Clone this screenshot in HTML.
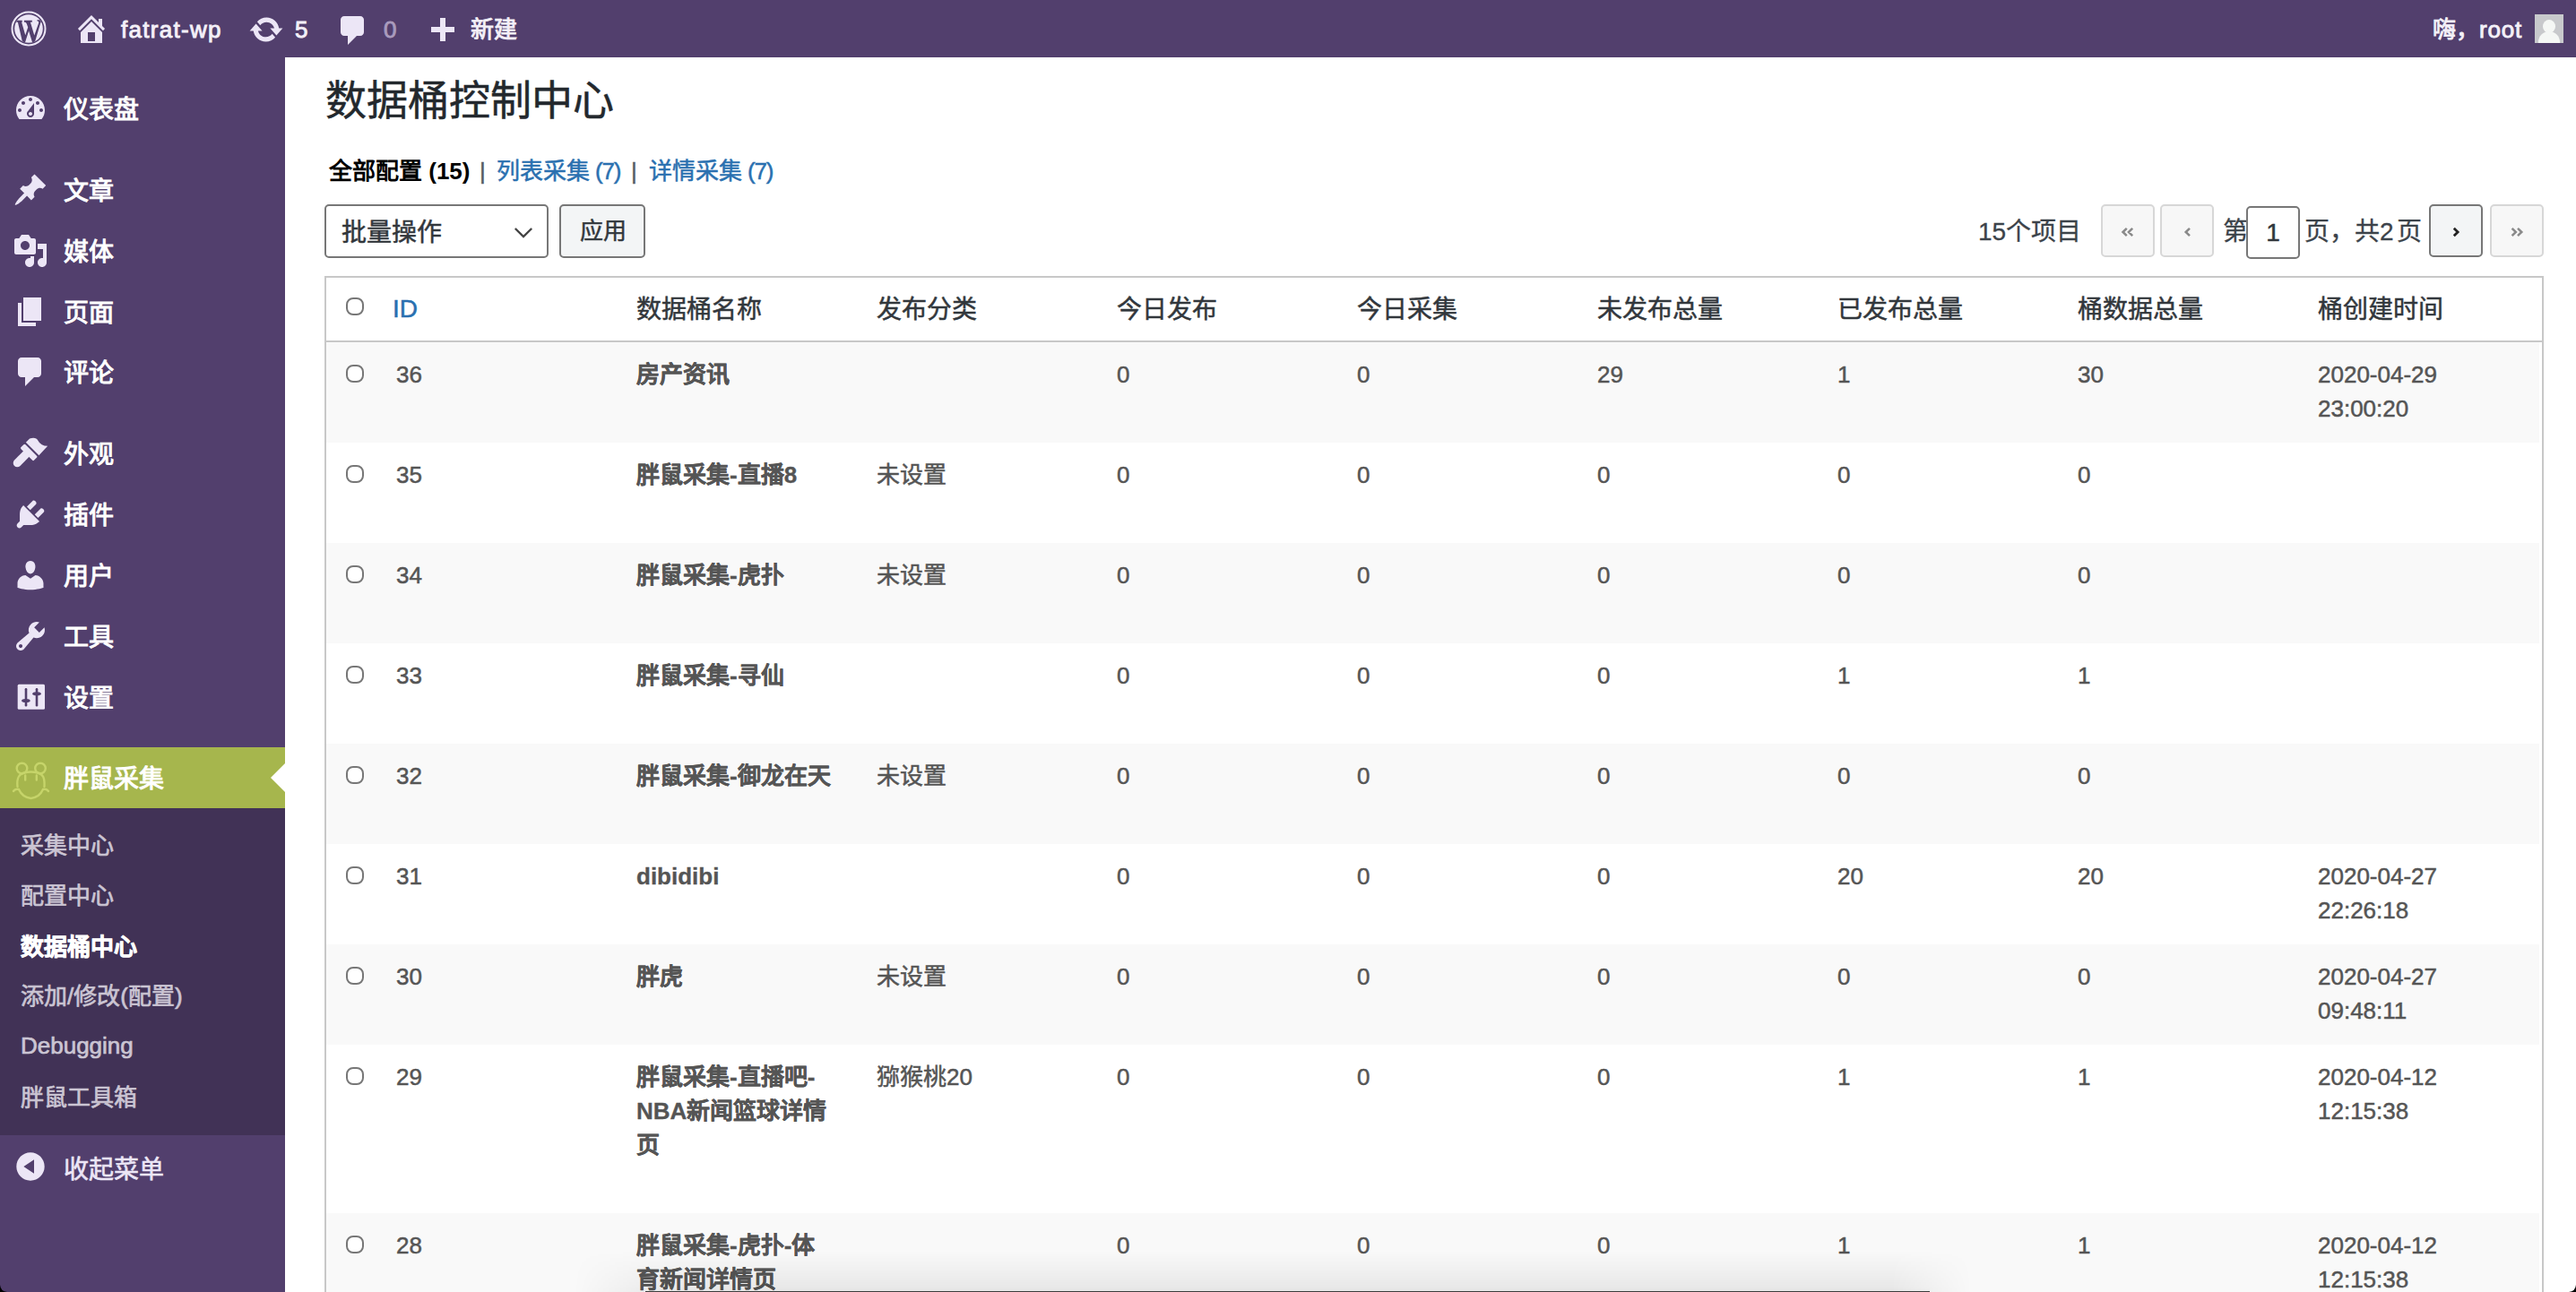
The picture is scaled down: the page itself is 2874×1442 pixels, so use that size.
<!DOCTYPE html>
<html lang="zh-CN"><head><meta charset="utf-8">
<style>
*{margin:0;padding:0;box-sizing:border-box}
html,body{width:2874px;height:1442px;overflow:hidden;background:#fff;font-family:"Liberation Sans",sans-serif;position:relative;-webkit-text-stroke-width:0.5px}
.a{position:absolute;white-space:nowrap}
#bar{position:absolute;left:0;top:0;width:2874px;height:64px;background:#523f6d}
#side{position:absolute;left:0;top:64px;width:318px;height:1378px;background:#523f6d}
.bt{color:#f4f0f8;font-size:26px;line-height:26px;-webkit-text-stroke-width:0.9px}
.ns{-webkit-text-stroke-width:0}
.mi{color:#fff;font-size:28px;line-height:28px;left:71px;-webkit-text-stroke-width:1px}
.ic{position:absolute;fill:#ece6f6}
#sub{position:absolute;left:0;top:902px;width:318px;height:365px;background:#413256}
.si{color:#cbc5d3;font-size:26px;line-height:26px;left:23px;-webkit-text-stroke-width:0.7px}
#green{position:absolute;left:0;top:834px;width:318px;height:68px;background:#a6b64d}
.h1{left:363px;top:89px;font-size:46px;line-height:46px;color:#23282d}
.ss{font-size:26px;line-height:26px;top:178px;color:#2a70b0}
.sep{color:#555d66}
.box{position:absolute;border:2px solid #777;border-radius:5px;background:#fff}
.pg{position:absolute;width:60px;height:59px;border:2px solid #d7d7d7;border-radius:5px;background:#f7f7f7}
.th{font-size:28px;line-height:28px;top:332px;color:#32373c}
.row{position:absolute;left:364px;width:2469px}
.odd{background:#f9f9f9}
.td{font-size:26px;line-height:38px;color:#555}
.cb{position:absolute;width:20px;height:20px;border:2px solid #777;border-radius:8px;background:#fff}
b{font-weight:bold}
</style></head><body>
<div id="bar">
  <svg class="a" style="left:0;top:0" width="64" height="64" viewBox="0 0 64 64">
    <defs><clipPath id="cd"><circle cx="32" cy="32" r="15.8"/></clipPath></defs>
    <circle cx="32" cy="32" r="18.5" fill="none" stroke="#ece6f6" stroke-width="2"/>
    <circle cx="32" cy="32" r="15.8" fill="#ece6f6"/>
    <g clip-path="url(#cd)" fill="#523f6d"><path d="M18.2 22.8 H24.7 V24.7 H24.1 L28.3 39.2 L31.2 30.6 L29.7 26.2 L28.4 24.7 H26.9 V22.8 H35.8 V24.7 H33.9 L38.3 39.4 L43.2 25.5 Q43.6 23.5 41.6 23.6 L41.3 22.3 H46.6 V23.5 Q45.6 24.5 45.2 25.8 L38.6 48 H36.3 L32.1 34.5 L27.8 48 H25.3 L19.9 24.7 H18.2 Z"/></g>
  </svg>
  <svg class="ic" style="left:82px;top:12px" width="40" height="40" viewBox="0 0 20 20"><path d="M16 8.5l1.53 1.53-1.06 1.06L10 4.62l-6.47 6.47-1.06-1.06L10 2.5l4 4v-2h2v4zm-6-2.46l6 5.99V18H4v-5.97zM12 17v-5H8v5h4z"/></svg>
  <div class="a bt" style="left:135px;top:20px;letter-spacing:1.3px">fatrat-wp</div>
  <svg class="ic" style="left:277px;top:13px" width="40" height="40" viewBox="0 0 20 20"><path d="M10.2 3.28c3.53 0 6.43 2.61 6.92 6h2.08l-3.5 4-3.5-4h2.32c-.45-1.970-2.21-3.45-4.32-3.45-1.450 0-2.730.71-3.54 1.78L4.95 5.66C6.23 4.2 8.11 3.28 10.2 3.28zm-.4 13.44c-3.52 0-6.43-2.61-6.92-6H.8l3.5-4c1.17 1.33 2.33 2.67 3.5 4H5.48c.45 1.97 2.21 3.45 4.32 3.45 1.45 0 2.73-.71 3.54-1.78l1.71 1.95c-1.28 1.46-3.15 2.38-5.25 2.38z"/></svg>
  <div class="a bt" style="left:329px;top:20px">5</div>
  <svg class="ic" style="left:374px;top:14px" width="40" height="40" viewBox="0 0 20 20"><path d="M5 2h9c1.1 0 2 .9 2 2v7c0 1.1-.9 2-2 2h-2l-5 5v-5H5c-1.1 0-2-.9-2-2V4c0-1.1.9-2 2-2z"/></svg>
  <div class="a bt" style="left:428px;top:20px;color:#a99bbd">0</div>
  <svg class="ic" style="left:473px;top:16px" width="40" height="40" viewBox="0 0 20 20"><path d="M17 7v3h-5v5H9v-5H4V7h5V2h3v5h5z"/></svg>
  <div class="a bt" style="left:525px;top:20px">新建</div>
  <div class="a bt" style="left:2714px;top:20px">嗨，<span style="letter-spacing:0.8px">root</span></div>
  <div class="a" style="left:2828px;top:16px;width:32px;height:32px;background:#c8c9cc;overflow:hidden">
    <div class="a" style="left:9px;top:6px;width:14px;height:15px;border-radius:50%;background:#f5f7f5"></div>
    <div class="a" style="left:4px;top:19px;width:24px;height:20px;border-radius:12px 12px 0 0;background:#f5f7f5"></div>
  </div>
</div>

<div id="side">
</div>
<div id="green"></div>
<div id="sub"></div>
<svg class="ic" id="i_dash" style="left:14px;top:101px" width="40" height="40" viewBox="0 0 20 20"><path d="M3.76 16h12.48c1.1-1.37 1.76-3.11 1.76-5 0-4.42-3.58-8-8-8s-8 3.58-8 8c0 1.89.66 3.63 1.76 5zM10 4c.55 0 1 .45 1 1s-.45 1-1 1-1-.45-1-1 .45-1 1-1zM6 6c.55 0 1 .45 1 1s-.45 1-1 1-1-.45-1-1 .45-1 1-1zm8 0c.55 0 1 .45 1 1s-.45 1-1 1-1-.45-1-1 .45-1 1-1zm-5.37 5.55L12 7v6c0 1.1-.9 2-2 2s-2-.9-2-2c0-.57.24-1.08.63-1.45zM4 10c.55 0 1 .45 1 1s-.45 1-1 1-1-.45-1-1 .45-1 1-1zm12 0c.55 0 1 .45 1 1s-.45 1-1 1-1-.45-1-1 .45-1 1-1zm-5 3c0-.55-.45-1-1-1s-1 .45-1 1 .45 1 1 1 1-.45 1-1z"/></svg>
<svg class="ic" id="i_post" style="left:14px;top:192px" width="40" height="40" viewBox="0 0 20 20"><path d="M10.44 3.02l1.82-1.82 6.36 6.35-1.83 1.82c-1.05-.68-2.48-.57-3.41.36l-.75.75c-.92.93-1.04 2.35-.35 3.41l-1.83 1.82-2.41-2.41-2.8 2.79c-.42.42-3.38 2.71-3.8 2.29s1.86-3.39 2.28-3.81l2.79-2.79L4.1 9.36l1.83-1.82c1.05.69 2.48.57 3.4-.36l.75-.75c.93-.92 1.05-2.35.36-3.41z"/></svg>
<svg class="ic" id="i_media" style="left:14px;top:260px" width="40" height="40" viewBox="0 0 20 20"><path d="M13 11V4c0-.55-.45-1-1-1h-1.67L9 1H5L3.67 3H2c-.55 0-1 .45-1 1v7c0 .55.45 1 1 1h10c.55 0 1-.45 1-1zM7 4.5c1.38 0 2.5 1.12 2.5 2.5S8.38 9.5 7 9.5 4.5 8.38 4.5 7 5.62 4.5 7 4.5zM14 6h5v10.5c0 1.38-1.12 2.5-2.5 2.5S14 17.88 14 16.5s1.12-2.5 2.5-2.5c.17 0 .34.02.5.05V9h-3V6zm-4 8.05V13h2v3.5c0 1.38-1.12 2.5-2.5 2.5S7 17.88 7 16.5 8.12 14 9.5 14c.17 0 .34.02.5.05z"/></svg>
<svg class="ic" id="i_page" style="left:14px;top:328px" width="40" height="40" viewBox="0 0 20 20"><path d="M6 15V2h10v13H6zm-1 1h8v2H3V5h2v11z"/></svg>
<svg class="ic" id="i_comm" style="left:14px;top:395px" width="40" height="40" viewBox="0 0 20 20"><path d="M5 2h9c1.1 0 2 .9 2 2v7c0 1.1-.9 2-2 2h-2l-5 5v-5H5c-1.1 0-2-.9-2-2V4c0-1.1.9-2 2-2z"/></svg>
<svg class="a" id="i_appear" style="left:0;top:470px" width="60" height="60" viewBox="0 470 60 60"><g transform="translate(35.5 501.8) rotate(45)" fill="#ece6f6"><path d="M-5.5 6 H3.6 V22 A4.55 4.55 0 0 1 -5.5 22 Z"/><rect x="-10.4" y="1" width="20.6" height="7" rx="1.5"/><path d="M-10.4 -1 H10.2 L9.6 -15.4 Q4 -10 -2 -12 Q-7 -13.5 -10.4 -7 Z"/></g></svg>
<svg class="ic" id="i_plug" style="left:14px;top:554px" width="40" height="40" viewBox="0 0 20 20"><path d="M13.11 4.36L9.87 7.6 8 5.73l3.24-3.24c.35-.34 1.05-.2 1.56.32.52.51.66 1.21.31 1.55zm-8 1.77l.91-1.12 9.01 9.01-1.19.84c-.71.71-2.63 1.16-3.82 1.16H6.14L4.9 17.26c-.59.59-1.54.59-2.12 0-.59-.58-.59-1.53 0-2.12l1.24-1.24v-3.88c0-1.13.4-3.19 1.09-3.89zm7.26 3.97l3.24-3.24c.34-.35 1.04-.21 1.55.31.52.51.66 1.21.31 1.55l-3.24 3.25z"/></svg>
<svg class="ic" id="i_users" style="left:14px;top:622px" width="40" height="40" viewBox="0 0 20 20"><path d="M10 9.25c-2.27 0-2.73-3.44-2.73-3.44C7 4.02 7.82 2 9.97 2c2.16 0 2.98 2.02 2.71 3.81 0 0-.41 3.44-2.68 3.44zm0 2.57L12.72 10c2.39 0 4.52 2.33 4.52 4.530v2.49s-3.65 1.13-7.24 1.130c-3.65 0-7.24-1.13-7.24-1.13v-2.49c0-2.25 1.94-4.48 4.47-4.48z"/></svg>
<svg class="ic" id="i_tools" style="left:14px;top:690px" width="40" height="40" viewBox="0 0 20 20"><path d="M16.68 9.77c-1.34 1.34-3.3 1.67-4.95.99l-5.41 6.52c-.99.99-2.59.99-3.58 0s-.99-2.59 0-3.57l6.52-5.42c-.68-1.65-.35-3.61.99-4.95 1.28-1.28 3.12-1.62 4.72-1.06l-2.89 2.890 2.82 2.82 2.86-2.87c.53 1.58.18 3.390-1.08 4.65zM3.81 16.21c.4.39 1.04.39 1.43 0 .4-.4.4-1.04 0-1.43-.39-.4-1.03-.4-1.43 0-.39.39-.39 1.03 0 1.43z"/></svg>
<svg class="a" id="i_settings" style="left:0;top:750px" width="60" height="60" viewBox="0 750 60 60"><rect x="19.7" y="763.7" width="30.3" height="28.1" rx="1.5" fill="#ece6f6"/><g fill="#523f6d"><rect x="27.7" y="768" width="2.6" height="20.5" rx="1.2"/><ellipse cx="28.9" cy="782" rx="4.8" ry="2"/><rect x="39.7" y="768" width="2.6" height="20.5" rx="1.2"/><ellipse cx="41" cy="774.2" rx="4.8" ry="2"/></g></svg>
<svg class="ic" id="i_collapse" style="left:14px;top:1282px" width="40" height="40" viewBox="0 0 20 20"><path d="M10 2.16c4.33 0 7.84 3.51 7.84 7.84s-3.51 7.84-7.84 7.84S2.16 14.33 2.16 10 5.71 2.16 10 2.16zm2 11.72V6.12L6.18 9.97z"/></svg>

<div class="a mi" style="top:109px">仪表盘</div>
<div class="a mi" style="top:200px">文章</div>
<div class="a mi" style="top:268px">媒体</div>
<div class="a mi" style="top:336px">页面</div>
<div class="a mi" style="top:403px">评论</div>
<div class="a mi" style="top:494px">外观</div>
<div class="a mi" style="top:562px">插件</div>
<div class="a mi" style="top:630px">用户</div>
<div class="a mi" style="top:698px">工具</div>
<div class="a mi" style="top:766px">设置</div>
<svg class="a" style="left:0;top:834px" width="70" height="68" viewBox="0 834 70 68"><g fill="none" stroke="#c6d46a" stroke-width="2.4" stroke-linecap="round"><circle cx="24.5" cy="857.5" r="5.8"/><circle cx="45" cy="857.5" r="5.8"/><path d="M19.5 878 C18.5 868 21 864 27 862.5 Q34.5 860.5 42 862.5 C48 864 50 868 49.5 878"/><path d="M15 883 Q17 880 21 881 Q25 890 34.5 891 Q44 890 48 881 Q52 880 54 883"/><path d="M28.2 865.5 V870.5 M40.8 865.5 V870.5"/></g></svg>
<div class="a mi" style="top:856px">胖鼠采集</div>
<svg class="a" style="left:302px;top:852px" width="16" height="32" viewBox="0 0 16 32"><path d="M16 0 L0 16 L16 32 Z" fill="#fff"/></svg>

<div class="a si" style="top:931px">采集中心</div>
<div class="a si" style="top:987px">配置中心</div>
<div class="a si ns" style="top:1044px;color:#fff;font-weight:bold">数据桶中心</div>
<div class="a si" style="top:1099px">添加/修改(配置)</div>
<div class="a si" style="top:1154px">Debugging</div>
<div class="a si" style="top:1212px">胖鼠工具箱</div>
<div class="a mi" style="top:1292px;color:#ece6f6;-webkit-text-stroke-width:0.6px">收起菜单</div>

<!-- content -->
<div class="a h1">数据桶控制中心</div>
<div class="a ss ns" style="left:367px;color:#000;font-weight:bold">全部配置 (15)</div>
<div class="a ss sep" style="left:535px">|</div>
<div class="a ss" style="left:554px">列表采集<span style="letter-spacing:-1.2px"> (7)</span></div>
<div class="a ss sep" style="left:704px">|</div>
<div class="a ss" style="left:724px">详情采集<span style="letter-spacing:-1.2px"> (7)</span></div>

<div class="box" style="left:362px;top:228px;width:250px;height:60px"></div>
<div class="a" style="left:381px;top:246px;font-size:28px;line-height:28px;color:#32373c">批量操作</div>
<svg class="a" style="left:560px;top:240px" width="50" height="40" viewBox="560 240 50 40"><path d="M574.8 255 L584 264 L593.2 255" fill="none" stroke="#444" stroke-width="2.4"/></svg>
<div class="box" style="left:624px;top:228px;width:96px;height:60px;background:#f3f5f6"></div>
<div class="a" style="left:647px;top:245px;font-size:26px;line-height:26px;color:#32373c">应用</div>

<div class="a" style="left:2207px;top:245px;font-size:28px;line-height:28px;color:#3c434a;-webkit-text-stroke-width:0.3px">15个项目</div>
<div class="pg" style="left:2344px;top:228px"></div>
<div class="pg" style="left:2410px;top:228px"></div>
<div class="a" style="left:2480px;top:245px;font-size:28px;line-height:28px;color:#3c434a;-webkit-text-stroke-width:0.3px">第</div>
<div class="box" style="left:2506px;top:230px;width:60px;height:59px;text-align:center;font-size:28px;line-height:55px;color:#32373c">1</div>
<div class="a" style="left:2571px;top:245px;font-size:28px;line-height:28px;color:#3c434a;-webkit-text-stroke-width:0.3px">页，共2<span style="margin-left:3px">页</span></div>
<div class="pg" style="left:2710px;top:228px;border-color:#777;background:#f3f5f6"></div>
<div class="pg" style="left:2778px;top:228px"></div>
<svg class="a" style="left:2340px;top:240px" width="500" height="40" viewBox="2340 240 500 40"><g fill="none" stroke-width="2.5" stroke-linejoin="miter"><path d="M2372.8 254.8 L2368.5 259 L2372.8 263.2 M2379.2 254.8 L2374.9 259 L2379.2 263.2 M2443 254.8 L2438.7 259 L2443 263.2" stroke="#8a8a8a"/><path d="M2737.8 254.8 L2742.1 259 L2737.8 263.2" stroke="#222" stroke-width="2.8"/><path d="M2802.6 254.8 L2806.9 259 L2802.6 263.2 M2809 254.8 L2813.3 259 L2809 263.2" stroke="#8a8a8a"/></g></svg>

<!-- table -->
<div class="a" style="left:362px;top:308px;width:2476px;height:1200px;border:2px solid #c8c8c8;border-width:2px 2px 0 2px"></div>
<div class="a" style="left:364px;top:380px;width:2472px;height:2px;background:#c8c8c8"></div>
<div class="cb" style="left:386px;top:332px"></div>
<div class="a th" style="left:438px;top:331px;color:#2a70b0">ID</div>
<div class="a th" style="left:710px">数据桶名称</div>
<div class="a th" style="left:978px">发布分类</div>
<div class="a th" style="left:1246px">今日发布</div>
<div class="a th" style="left:1514px">今日采集</div>
<div class="a th" style="left:1782px">未发布总量</div>
<div class="a th" style="left:2050px">已发布总量</div>
<div class="a th" style="left:2318px">桶数据总量</div>
<div class="a th" style="left:2586px">桶创建时间</div>

<div class="row odd" style="top:382px;height:112px"></div>
<div class="cb" style="left:386px;top:407px"></div>
<div class="a td" style="left:442px;top:399px">36</div>
<div class="a td" style="left:710px;top:399px;font-weight:bold;-webkit-text-stroke-width:0.3px">房产资讯</div>
<div class="a td" style="left:1246px;top:399px">0</div>
<div class="a td" style="left:1514px;top:399px">0</div>
<div class="a td" style="left:1782px;top:399px">29</div>
<div class="a td" style="left:2050px;top:399px">1</div>
<div class="a td" style="left:2318px;top:399px">30</div>
<div class="a td" style="left:2586px;top:399px">2020-04-29<br>23:00:20</div>
<div class="row" style="top:494px;height:112px"></div>
<div class="cb" style="left:386px;top:519px"></div>
<div class="a td" style="left:442px;top:511px">35</div>
<div class="a td" style="left:710px;top:511px;font-weight:bold;-webkit-text-stroke-width:0.3px">胖鼠采集-直播8</div>
<div class="a td" style="left:978px;top:511px">未设置</div>
<div class="a td" style="left:1246px;top:511px">0</div>
<div class="a td" style="left:1514px;top:511px">0</div>
<div class="a td" style="left:1782px;top:511px">0</div>
<div class="a td" style="left:2050px;top:511px">0</div>
<div class="a td" style="left:2318px;top:511px">0</div>
<div class="row odd" style="top:606px;height:112px"></div>
<div class="cb" style="left:386px;top:631px"></div>
<div class="a td" style="left:442px;top:623px">34</div>
<div class="a td" style="left:710px;top:623px;font-weight:bold;-webkit-text-stroke-width:0.3px">胖鼠采集-虎扑</div>
<div class="a td" style="left:978px;top:623px">未设置</div>
<div class="a td" style="left:1246px;top:623px">0</div>
<div class="a td" style="left:1514px;top:623px">0</div>
<div class="a td" style="left:1782px;top:623px">0</div>
<div class="a td" style="left:2050px;top:623px">0</div>
<div class="a td" style="left:2318px;top:623px">0</div>
<div class="row" style="top:718px;height:112px"></div>
<div class="cb" style="left:386px;top:743px"></div>
<div class="a td" style="left:442px;top:735px">33</div>
<div class="a td" style="left:710px;top:735px;font-weight:bold;-webkit-text-stroke-width:0.3px">胖鼠采集-寻仙</div>
<div class="a td" style="left:1246px;top:735px">0</div>
<div class="a td" style="left:1514px;top:735px">0</div>
<div class="a td" style="left:1782px;top:735px">0</div>
<div class="a td" style="left:2050px;top:735px">1</div>
<div class="a td" style="left:2318px;top:735px">1</div>
<div class="row odd" style="top:830px;height:112px"></div>
<div class="cb" style="left:386px;top:855px"></div>
<div class="a td" style="left:442px;top:847px">32</div>
<div class="a td" style="left:710px;top:847px;font-weight:bold;-webkit-text-stroke-width:0.3px">胖鼠采集-御龙在天</div>
<div class="a td" style="left:978px;top:847px">未设置</div>
<div class="a td" style="left:1246px;top:847px">0</div>
<div class="a td" style="left:1514px;top:847px">0</div>
<div class="a td" style="left:1782px;top:847px">0</div>
<div class="a td" style="left:2050px;top:847px">0</div>
<div class="a td" style="left:2318px;top:847px">0</div>
<div class="row" style="top:942px;height:112px"></div>
<div class="cb" style="left:386px;top:967px"></div>
<div class="a td" style="left:442px;top:959px">31</div>
<div class="a td" style="left:710px;top:959px;font-weight:bold;-webkit-text-stroke-width:0.3px">dibidibi</div>
<div class="a td" style="left:1246px;top:959px">0</div>
<div class="a td" style="left:1514px;top:959px">0</div>
<div class="a td" style="left:1782px;top:959px">0</div>
<div class="a td" style="left:2050px;top:959px">20</div>
<div class="a td" style="left:2318px;top:959px">20</div>
<div class="a td" style="left:2586px;top:959px">2020-04-27<br>22:26:18</div>
<div class="row odd" style="top:1054px;height:112px"></div>
<div class="cb" style="left:386px;top:1079px"></div>
<div class="a td" style="left:442px;top:1071px">30</div>
<div class="a td" style="left:710px;top:1071px;font-weight:bold;-webkit-text-stroke-width:0.3px">胖虎</div>
<div class="a td" style="left:978px;top:1071px">未设置</div>
<div class="a td" style="left:1246px;top:1071px">0</div>
<div class="a td" style="left:1514px;top:1071px">0</div>
<div class="a td" style="left:1782px;top:1071px">0</div>
<div class="a td" style="left:2050px;top:1071px">0</div>
<div class="a td" style="left:2318px;top:1071px">0</div>
<div class="a td" style="left:2586px;top:1071px">2020-04-27<br>09:48:11</div>
<div class="row" style="top:1166px;height:188px"></div>
<div class="cb" style="left:386px;top:1191px"></div>
<div class="a td" style="left:442px;top:1183px">29</div>
<div class="a td" style="left:710px;top:1183px;font-weight:bold;-webkit-text-stroke-width:0.3px">胖鼠采集-直播吧-<br>NBA新闻篮球详情<br>页</div>
<div class="a td" style="left:978px;top:1183px">猕猴桃20</div>
<div class="a td" style="left:1246px;top:1183px">0</div>
<div class="a td" style="left:1514px;top:1183px">0</div>
<div class="a td" style="left:1782px;top:1183px">0</div>
<div class="a td" style="left:2050px;top:1183px">1</div>
<div class="a td" style="left:2318px;top:1183px">1</div>
<div class="a td" style="left:2586px;top:1183px">2020-04-12<br>12:15:38</div>
<div class="row odd" style="top:1354px;height:188px"></div>
<div class="cb" style="left:386px;top:1379px"></div>
<div class="a td" style="left:442px;top:1371px">28</div>
<div class="a td" style="left:710px;top:1371px;font-weight:bold;-webkit-text-stroke-width:0.3px">胖鼠采集-虎扑-体<br>育新闻详情页</div>
<div class="a td" style="left:1246px;top:1371px">0</div>
<div class="a td" style="left:1514px;top:1371px">0</div>
<div class="a td" style="left:1782px;top:1371px">0</div>
<div class="a td" style="left:2050px;top:1371px">1</div>
<div class="a td" style="left:2318px;top:1371px">1</div>
<div class="a td" style="left:2586px;top:1371px">2020-04-12<br>12:15:38</div>

<div class="a" style="left:640px;top:1396px;width:1600px;height:46px;background:linear-gradient(to bottom,rgba(0,0,0,0),rgba(0,0,0,0.075));-webkit-mask-image:linear-gradient(to right,transparent 0,#000 110px,#000 1470px,transparent 1560px)"></div>
<div class="a" style="left:720px;top:1441px;width:1433px;height:1px;background:#3c3c3c"></div>
<svg class="a" style="left:0;top:1434px" width="8" height="8" viewBox="0 0 8 8"><path d="M0 0 Q0.7 7.3 8 8 H0 Z" fill="#000"/></svg>
<svg class="a" style="left:2866px;top:1434px" width="8" height="8" viewBox="0 0 8 8"><path d="M8 0 Q7.3 7.3 0 8 H8 Z" fill="#000"/></svg>
</body></html>
